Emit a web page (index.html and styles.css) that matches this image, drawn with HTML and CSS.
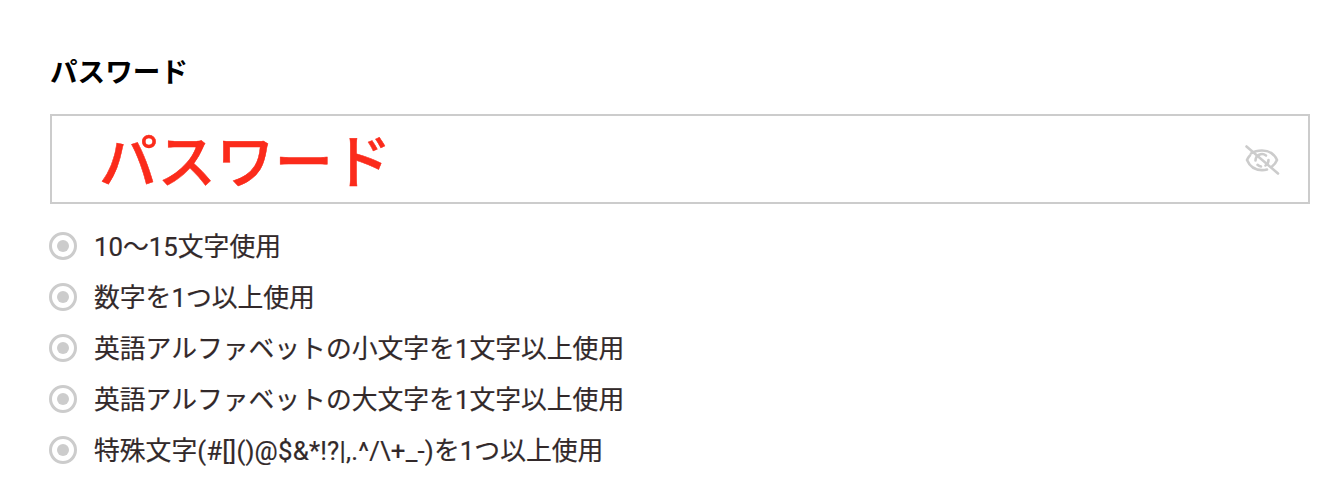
FILE: index.html
```html
<!DOCTYPE html>
<html lang="ja">
<head>
  <meta charset="UTF-8">
  <title>パスワード</title>
  <link rel="stylesheet" href="styles.css">
</head>
<body>
  <div class="form-field">
    <div class="field-label">パスワード</div>
    <div class="input-box">
      <span class="input-value">パスワード</span>
      <svg class="eye-icon" width="36" height="30" viewBox="0 0 36 30" fill="none" stroke="#ccc" stroke-width="2.600" stroke-linecap="round">
        <path d="M7 8.500C10 6.500 14 5.500 18 5.500c7 0 12.500 4 15 9.500-1 2.500-3 5-5 6.500"/>
        <path d="M23 24.500c-1.500.4-3.200.6-5 .6C11 25 5.500 21 3 15c.7-1.700 1.700-3.200 3-4.600"/>
        <path d="M11.500 15.500a6.500 6.500 0 0 1 10.500-5"/>
        <path d="M24.500 15a6.500 6.500 0 0 1-3 5.500"/>
        <path d="M17 21.500a6.500 6.500 0 0 1-3.500-1.700"/>
        <path d="M2.500 1.500L34 28.500"/>
      </svg>
    </div>
    <ul class="rules">
      <li class="rule"><span class="rule-dot"></span>10〜15文字使用</li>
      <li class="rule"><span class="rule-dot"></span>数字を1つ以上使用</li>
      <li class="rule"><span class="rule-dot"></span>英語アルファベットの小文字を1文字以上使用</li>
      <li class="rule"><span class="rule-dot"></span>英語アルファベットの大文字を1文字以上使用</li>
      <li class="rule"><span class="rule-dot"></span><span>特殊文字<span class="symbols">(#[]()@$&amp;*!?|,.^/\+_-)</span>を1つ以上使用</span></li>
    </ul>
  </div>
</body>
</html>
```

FILE: styles.css
```css
html, body {
  margin: 0;
  padding: 0;
  background-color: #fff;
  font-family: Roboto, "Noto Sans CJK JP", sans-serif;
}

.form-field {
  padding: 54px 34px 0 50px;
}

.field-label {
  font-size: 27.6px;
  line-height: 38px;
  font-weight: bold;
  color: #000;
  margin-bottom: 22px;
}

.input-box {
  height: 90px;
  box-sizing: border-box;
  border: 2px solid #ccc;
  padding: 0 28px 0 47px;
  display: flex;
  align-items: center;
  justify-content: space-between;
}

.input-value {
  font-size: 58.5px;
  font-weight: 500;
  -webkit-text-stroke: 0.5px #fb2b1b;
  color: #fb2b1b;
  margin-bottom: 4px;
}

.eye-icon {
  margin-top: 1px;
}

.rules {
  list-style: none;
  margin: 15px 0 0 -1px;
  padding: 0;
}

.rule {
  display: flex;
  align-items: center;
  height: 51px;
  font-size: 25.8px;
  color: #32292a;
  -webkit-text-stroke: 0.2px #32292a;
}

.symbols {
  letter-spacing: 0.2px;
}

.rule-dot {
  width: 28px;
  height: 28px;
  box-sizing: border-box;
  border: 3px solid #ccc;
  border-radius: 50%;
  margin: 2px 17px 0 0;
  display: flex;
  align-items: center;
  justify-content: center;
}

.rule-dot::after {
  content: "";
  width: 12px;
  height: 12px;
  border-radius: 50%;
  background-color: #ccc;
}
```
